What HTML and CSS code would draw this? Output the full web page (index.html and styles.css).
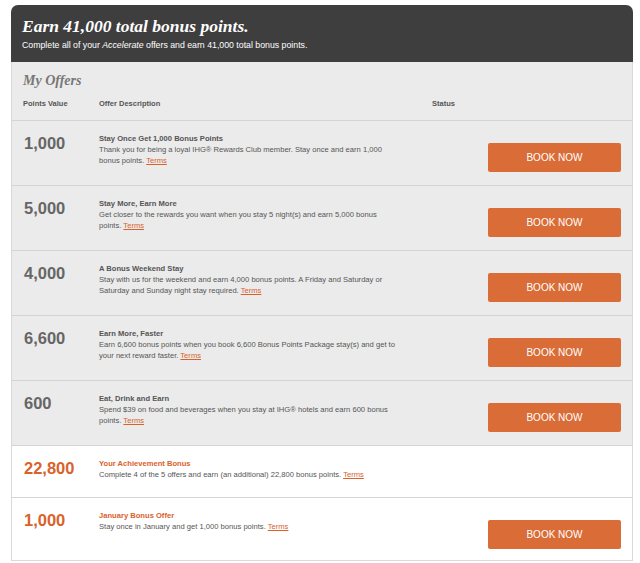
FILE: index.html
```html
<!DOCTYPE html>
<html lang="en">
<head>
    <meta charset="UTF-8">
    <title>My Offers</title>
    <link rel="stylesheet" href="styles.css">
</head>
<body>
    <div class="offers">
        <div class="banner">
            <h1>Earn 41,000 total bonus points.</h1>
            <p>Complete all of your <em>Accelerate</em> offers and earn 41,000 total bonus points.</p>
        </div>

        <div class="list-head">
            <h2>My Offers</h2>
            <div class="cols">
                <span>Points Value</span>
                <span>Offer Description</span>
                <span>Status</span>
            </div>
        </div>

        <!-- accelerate offers -->
        <div class="offer">
            <div class="points">1,000</div>
            <div class="desc">
                <h3>Stay Once Get 1,000 Bonus Points</h3>
                <p>Thank you for being a loyal IHG® Rewards Club member. Stay once and earn 1,000 bonus points. <a href="#">Terms</a></p>
            </div>
            <div class="status"><button class="book">BOOK NOW</button></div>
        </div>

        <div class="offer">
            <div class="points">5,000</div>
            <div class="desc">
                <h3>Stay More, Earn More</h3>
                <p>Get closer to the rewards you want when you stay 5 night(s) and earn 5,000 bonus points. <a href="#">Terms</a></p>
            </div>
            <div class="status"><button class="book">BOOK NOW</button></div>
        </div>

        <div class="offer">
            <div class="points">4,000</div>
            <div class="desc">
                <h3>A Bonus Weekend Stay</h3>
                <p>Stay with us for the weekend and earn 4,000 bonus points. A Friday and Saturday or Saturday and Sunday night stay required. <a href="#">Terms</a></p>
            </div>
            <div class="status"><button class="book">BOOK NOW</button></div>
        </div>

        <div class="offer">
            <div class="points">6,600</div>
            <div class="desc">
                <h3>Earn More, Faster</h3>
                <p>Earn 6,600 bonus points when you book 6,600 Bonus Points Package stay(s) and get to your next reward faster. <a href="#">Terms</a></p>
            </div>
            <div class="status"><button class="book">BOOK NOW</button></div>
        </div>

        <div class="offer">
            <div class="points">600</div>
            <div class="desc">
                <h3>Eat, Drink and Earn</h3>
                <p>Spend $39 on food and beverages when you stay at IHG® hotels and earn 600 bonus points. <a href="#">Terms</a></p>
            </div>
            <div class="status"><button class="book">BOOK NOW</button></div>
        </div>

        <!-- bonus offers -->
        <div class="offer bonus no-action">
            <div class="points">22,800</div>
            <div class="desc">
                <h3>Your Achievement Bonus</h3>
                <p>Complete 4 of the 5 offers and earn (an additional) 22,800 bonus points. <a href="#">Terms</a></p>
            </div>
            <div class="status"></div>
        </div>

        <div class="offer bonus">
            <div class="points">1,000</div>
            <div class="desc">
                <h3>January Bonus Offer</h3>
                <p>Stay once in January and get 1,000 bonus points. <a href="#">Terms</a></p>
            </div>
            <div class="status"><button class="book">BOOK NOW</button></div>
        </div>
    </div>
</body>
</html>
```

FILE: styles.css
```css
body {
    margin: 0;
    background: #fff;
    font-family: 'Liberation Sans', Arial, Helvetica, sans-serif;
    color: #555;
}
.offers {
    width: 620px;
    margin: 5px 0 0 11px;
    border: 1px solid #d9d9d9;
    border-top: none;
    border-radius: 7px 7px 0 0;
}
.banner {
    background: #3e3e3e;
    color: #fff;
    padding: 12px 11px 11px;
    border-radius: 7px 7px 0 0;
    margin: 0 -1px;
}
.banner h1 {
    margin: 0;
    font-family: 'Liberation Serif', Georgia, serif;
    font-style: italic;
    font-weight: bold;
    font-size: 17.5px;
    line-height: 18px;
}
.banner p {
    margin: 5px 0 0;
    font-size: 8.75px;
    line-height: 11px;
}
.list-head {
    background: #ebebeb;
    padding: 11px 11px 11px;
    border-bottom: 1px solid #d4d4d4;
}
.list-head h2 {
    margin: 0;
    font-family: 'Liberation Serif', Georgia, serif;
    font-style: italic;
    font-weight: bold;
    font-size: 14px;
    line-height: 16px;
    color: #777;
}
.cols {
    display: grid;
    grid-template-columns: 76px 333px 1fr;
    margin-top: 10px;
    font-size: 7.5px;
    font-weight: bold;
    line-height: 10px;
    color: #555;
}
.offer {
    display: grid;
    grid-template-columns: 76px 333px 1fr;
    background: #ebebeb;
    padding: 12px 11px 13px;
    border-bottom: 1px solid #d4d4d4;
}
.offer:last-child {
    border-bottom: none;
    padding-bottom: 11px;
}
.points {
    font-size: 16.5px;
    font-weight: bold;
    line-height: 20px;
    color: #666;
    padding-left: 1px;
}
.desc h3 {
    margin: 0;
    font-size: 7.6px;
    line-height: 11px;
    font-weight: bold;
    color: #555;
}
.desc p {
    margin: 0;
    width: 302px;
    font-size: 7.6px;
    line-height: 11px;
    color: #555;
}
.desc a {
    color: #d9622b;
    text-decoration: underline;
}
.status {
    display: flex;
    justify-content: flex-end;
    align-items: flex-start;
}
.book {
    margin-top: 10px;
    width: 133px;
    height: 29px;
    border: none;
    border-radius: 2px;
    background: #d96c37;
    color: #fff;
    font-family: 'Liberation Sans', Arial, sans-serif;
    font-size: 10px;
    cursor: pointer;
}
.bonus {
    background: #fff;
}
.bonus .points,
.bonus h3 {
    color: #d9622b;
}
.no-action {
    padding-bottom: 17px;
}
```
